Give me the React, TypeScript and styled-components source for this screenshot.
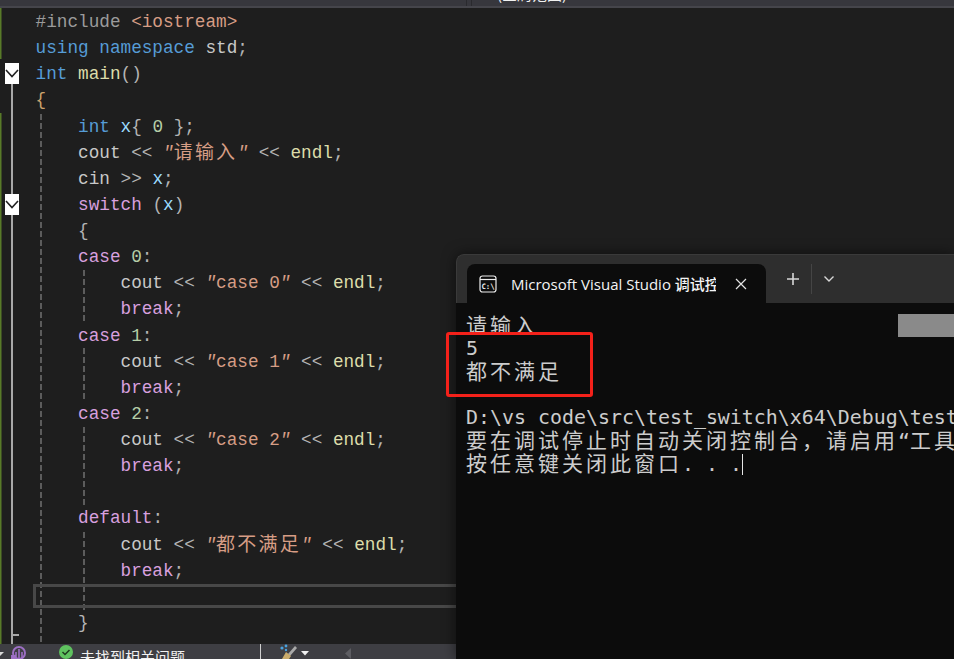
import React from "react";
import styled, { createGlobalStyle } from "styled-components";

const Global = createGlobalStyle`
  html, body { margin: 0; padding: 0; background: #1e1e1e; }
  #root { width: 954px; height: 659px; }
`;

const Page = styled.div`
  position: relative;
  width: 954px;
  height: 659px;
  overflow: hidden;
  display: flex;
  flex-direction: column;
  background: #1e1e1e;
`;

const TopBar = styled.div`
  flex: 0 0 8px;
  box-sizing: border-box;
  display: flex;
  align-items: flex-end;
  overflow: hidden;
  background: #37373d;
  border-bottom: 2px solid #45454b;
`;

const TopGap = styled.div`
  flex: 0 0 466px;
  height: 100%;
  border-right: 1px solid #2a2a2e;
`;

const TopDivider = styled.div`
  flex: 0 0 4px;
  height: 100%;
  border-right: 1px solid #2a2a2e;
`;

const TopLabel = styled.div`
  margin-left: 25px;
  height: 6px;
  display: flex;
  align-items: flex-end;
  padding-bottom: 3px;
  box-sizing: content-box;
  font: 15px/18px "Noto Sans CJK SC", sans-serif;
  color: #f1f1f1;
  white-space: nowrap;
`;

const Editor = styled.div`
  flex: 1;
  display: flex;
  min-height: 0;
  background: #1e1e1e;
`;

const GutterArt = styled.svg`
  flex: 0 0 33px;
  display: block;
  width: 33px;
  height: 636px;
`;

const Code = styled.div`
  position: relative;
  flex: 1;
  overflow: hidden;
  padding: 1px 0 0 2.6px;
  font-family: "Liberation Mono", "Noto Sans CJK SC", monospace;
  font-size: 17.7px;
  color: #dcdcdc;
`;

const Line = styled.div`
  height: 26.13px;
  line-height: 26.13px;
  white-space: pre;
`;

const Kw = styled.span`color: #569cd6;`;
const Ctl = styled.span`color: #d8a0df;`;
const Fn = styled.span`color: #dcdcaa;`;
const Var = styled.span`color: #9cdcfe;`;
const Num = styled.span`color: #b5cea8;`;
const Op = styled.span`color: #b4b4b4;`;
const Pre = styled.span`color: #9b9b9b;`;
const Inc = styled.span`color: #d69d85;`;
const Brace = styled.span`color: #c9a26d;`;
const Plain = styled.span`color: #c8c8c8;`;
const Str = styled.span`color: #d69d85;`;
const Quote = styled.span`font-style: italic;`;
const StrCjk = styled.span`
  font-family: "Noto Sans CJK SC", sans-serif;
  font-size: 19px;
  letter-spacing: 2.24px;
  line-height: 1;
  position: relative;
  top: 1px;
`;

const Guide = styled.div<{ $x: number; $top: number; $h: number }>`
  position: absolute;
  left: ${(p) => p.$x}px;
  top: ${(p) => p.$top}px;
  width: 2px;
  height: ${(p) => p.$h}px;
  background: repeating-linear-gradient(to bottom, #5c5c5c 0 6px, transparent 6px 9px);
`;

const CurrentLine = styled.div`
  position: absolute;
  left: 0;
  right: 0;
  top: 576px;
  height: 24px;
  box-sizing: border-box;
  border: 3px solid #484848;
`;

const StatusBar = styled.div`
  flex: 0 0 15px;
  display: flex;
  overflow: hidden;
  background: #3e3e43;
`;

const StatusIcon = styled.svg<{ $ml: number }>`
  flex: none;
  display: block;
  margin-left: ${(p) => p.$ml}px;
`;

const StatusText = styled.div`
  flex: none;
  margin-left: 7px;
  padding-top: 3px;
  font: 15px/20px "Noto Sans CJK SC", sans-serif;
  color: #f1f1f1;
  white-space: nowrap;
`;

const StatusSep = styled.div`
  flex: none;
  margin-left: 75px;
  width: 1px;
  height: 15px;
  background: #cfcfcf;
`;

const Terminal = styled.div`
  position: absolute;
  left: 456px;
  top: 254px;
  width: 498px;
  height: 405px;
  display: flex;
  flex-direction: column;
  box-sizing: border-box;
  background: #0c0c0c;
  border-top-left-radius: 8px;
  box-shadow: 0 0 14px rgba(0, 0, 0, 0.55);
`;

const TabBar = styled.div`
  flex: 0 0 49px;
  box-sizing: border-box;
  display: flex;
  align-items: flex-end;
  padding-left: 10px;
  background: #2e2e2e;
  border-top-left-radius: 8px;
  border-top: 1px solid #3a3a3a;
  border-left: 1px solid #3a3a3a;
`;

const Tab = styled.div`
  flex: 0 0 299px;
  height: 39px;
  box-sizing: border-box;
  display: flex;
  align-items: center;
  padding-left: 12px;
  background: #0c0c0c;
  border-radius: 8px 8px 0 0;
`;

const TabTitle = styled.div`
  flex: 0 0 205px;
  margin-left: 14px;
  overflow: hidden;
  white-space: nowrap;
  font: 500 15px/20px "Open Sans", "Noto Sans CJK SC", sans-serif;
  color: #f4f4f4;
`;

const TabClose = styled.svg`
  flex: none;
  margin-left: 19px;
`;

const NewTab = styled.svg`
  flex: none;
  align-self: center;
  margin-left: 20px;
`;

const TabSep = styled.div`
  flex: none;
  align-self: center;
  margin-left: 11px;
  width: 1px;
  height: 30px;
  background: #454545;
`;

const TabMenu = styled.svg`
  flex: none;
  align-self: center;
  margin-left: 11px;
`;

const TermBody = styled.div`
  flex: 1;
  padding: 11px 0 0 10px;
  overflow: hidden;
  font-family: "DejaVu Sans Mono", "Noto Sans CJK SC", monospace;
  font-size: 19.93px;
  color: #cccccc;
`;

const TermLine = styled.div<{ $clip?: boolean }>`
  height: ${(p) => (p.$clip ? 19 : 23)}px;
  margin-bottom: ${(p) => (p.$clip ? 4 : 0)}px;
  line-height: 23px;
  overflow: hidden;
  white-space: pre;
`;

const Cjk = styled.span`
  font-family: "Noto Sans CJK SC", sans-serif;
  font-size: 21px;
  letter-spacing: 3px;
  line-height: 1;
`;

const Caret = styled.span`
  display: inline-block;
  width: 1px;
  height: 22px;
  vertical-align: -5px;
  background: #e6e6e6;
`;

const Selection = styled.div`
  position: absolute;
  right: 0;
  top: 60px;
  width: 56px;
  height: 23px;
  background: #8a8a8a;
`;

const RedBox = styled.div`
  position: absolute;
  left: -10px;
  top: 78px;
  width: 147px;
  height: 65px;
  box-sizing: border-box;
  border: 3px solid #f4211a;
  border-radius: 3px;
`;

function Gutter() {
  return (
    <GutterArt viewBox="0 8 33 636">
      <rect x="0" y="8" width="1.5" height="51" fill="#587a28" />
      <rect x="0" y="113" width="1.5" height="531" fill="#587a28" />
      <rect x="11" y="84" width="2" height="110" fill="#a8a8a8" />
      <rect x="11" y="215" width="2" height="429" fill="#a8a8a8" />
      <rect x="11" y="634" width="8" height="2" fill="#a8a8a8" />
      <rect x="5" y="63" width="14" height="21" fill="#fff" />
      <path d="M6 70 L12 76.5 L18 70" fill="none" stroke="#222" strokeWidth="1.6" />
      <rect x="5" y="194" width="14" height="21" fill="#fff" />
      <path d="M6 201 L12 207.5 L18 201" fill="none" stroke="#222" strokeWidth="1.6" />
    </GutterArt>
  );
}

const S = ({ t }: { t: string }) => (
  <Str>
    <Quote>"</Quote>
    {t}
    <Quote>"</Quote>
  </Str>
);
const SC = ({ t }: { t: string }) => (
  <Str>
    <Quote>"</Quote>
    <StrCjk>{t}</StrCjk>
    <Quote>"</Quote>
  </Str>
);

const Cout = ({ pad, children }: { pad: string; children: React.ReactNode }) => (
  <Line>
    {pad}
    <Plain>cout</Plain> <Op>&lt;&lt;</Op> {children} <Op>&lt;&lt;</Op> <Fn>endl</Fn>
    <Op>;</Op>
  </Line>
);

const Brk = () => (
  <Line>
    {"        "}
    <Ctl>break</Ctl>
    <Op>;</Op>
  </Line>
);

const Case = ({ n }: { n: number }) => (
  <Line>
    {"    "}
    <Ctl>case</Ctl> <Num>{n}</Num>
    <Op>:</Op>
  </Line>
);

export default function App() {
  return (
    <Page>
      <Global />
      <TopBar>
        <TopGap />
        <TopDivider />
        <TopLabel>(全局范围)</TopLabel>
      </TopBar>
      <Editor>
        <Gutter />
        <Code>
          <Guide $x={7} $top={106} $h={530} />
          <Guide $x={50} $top={262} $h={53} />
          <Guide $x={50} $top={340} $h={53} />
          <Guide $x={50} $top={419} $h={79} />
          <Guide $x={50} $top={524} $h={78} />
          <CurrentLine />
          <Line>
            <Pre>#include</Pre> <Inc>&lt;iostream&gt;</Inc>
          </Line>
          <Line>
            <Kw>using</Kw> <Kw>namespace</Kw> <Plain>std</Plain>
            <Op>;</Op>
          </Line>
          <Line>
            <Kw>int</Kw> <Fn>main</Fn>
            <Op>()</Op>
          </Line>
          <Line>
            <Brace>{"{"}</Brace>
          </Line>
          <Line>
            {"    "}
            <Kw>int</Kw> <Var>x</Var>
            <Op>{"{"}</Op> <Num>0</Num> <Op>{"}"};</Op>
          </Line>
          <Cout pad="    ">
            <SC t="请输入" />
          </Cout>
          <Line>
            {"    "}
            <Plain>cin</Plain> <Op>&gt;&gt;</Op> <Var>x</Var>
            <Op>;</Op>
          </Line>
          <Line>
            {"    "}
            <Ctl>switch</Ctl> <Op>(</Op>
            <Var>x</Var>
            <Op>)</Op>
          </Line>
          <Line>
            {"    "}
            <Op>{"{"}</Op>
          </Line>
          <Case n={0} />
          <Cout pad="        ">
            <S t="case 0" />
          </Cout>
          <Brk />
          <Case n={1} />
          <Cout pad="        ">
            <S t="case 1" />
          </Cout>
          <Brk />
          <Case n={2} />
          <Cout pad="        ">
            <S t="case 2" />
          </Cout>
          <Brk />
          <Line />
          <Line>
            {"    "}
            <Ctl>default</Ctl>
            <Op>:</Op>
          </Line>
          <Cout pad="        ">
            <SC t="都不满足" />
          </Cout>
          <Brk />
          <Line />
          <Line>
            {"    "}
            <Op>{"}"}</Op>
          </Line>
        </Code>
      </Editor>
      <StatusBar>
        <StatusIcon $ml={0} width="5" height="15" viewBox="0 0 5 15">
          <path d="M0 8 H4 L0 12Z" fill="#d8d8d8" />
        </StatusIcon>
        <StatusIcon $ml={5} width="16" height="15" viewBox="0 0 16 15">
          <circle cx="9" cy="9" r="6" fill="none" stroke="#9d6fc4" strokeWidth="2" />
          <path d="M9 5 V15 M6 8 V15 M12 8 V15" stroke="#9d6fc4" strokeWidth="1.6" />
          <path d="M1 11 H6 V15 H1Z" fill="#9d6fc4" />
        </StatusIcon>
        <StatusIcon $ml={33} width="14" height="15" viewBox="0 0 14 15">
          <circle cx="7" cy="8" r="7" fill="#5fc25f" />
          <path d="M3.5 8 L6 10.5 L10.5 6" fill="none" stroke="#1f3a1f" strokeWidth="1.5" />
        </StatusIcon>
        <StatusText>未找到相关问题</StatusText>
        <StatusSep />
        <StatusIcon $ml={18} width="18" height="15" viewBox="0 0 18 15">
          <path d="M9 10 L16 2 L18 4 L11 12Z" fill="#a9a9a9" />
          <path d="M3 15 L7 8 L12 12 L10 15Z" fill="#c9ab6b" />
          <circle cx="3" cy="4" r="1.6" fill="#4aa3e0" />
          <circle cx="7" cy="2" r="1.4" fill="#4aa3e0" />
          <circle cx="7" cy="6" r="1.2" fill="#4aa3e0" />
        </StatusIcon>
        <StatusIcon $ml={3} width="10" height="15" viewBox="0 0 10 15">
          <path d="M1 7 H9 L5 11.5Z" fill="#f0f0f0" />
        </StatusIcon>
        <StatusIcon $ml={35} width="8" height="15" viewBox="0 0 8 15">
          <path d="M6 4 V15 L0 9.5Z" fill="#5d5d62" />
        </StatusIcon>
      </StatusBar>
      <Terminal>
        <TabBar>
          <Tab>
            <svg width="18" height="18" viewBox="0 0 18 18">
              <rect x="1" y="1" width="16" height="16" rx="2.5" fill="none" stroke="#eeeeee" strokeWidth="1.2" />
              <path d="M1 4.5 H17" stroke="#eeeeee" strokeWidth="1.2" />
              <text x="2.4" y="13.5" fontFamily="DejaVu Sans Mono" fontWeight="700" fontSize="7.4" fill="#eeeeee">
                C:\
              </text>
            </svg>
            <TabTitle>Microsoft Visual Studio 调试控制台</TabTitle>
            <TabClose width="12" height="12" viewBox="0 0 12 12">
              <path d="M1 1 L11 11 M11 1 L1 11" stroke="#e4e4e4" strokeWidth="1.2" />
            </TabClose>
          </Tab>
          <NewTab width="14" height="14" viewBox="0 0 14 14">
            <path d="M7 1 V13 M1 7 H13" stroke="#d8d8d8" strokeWidth="1.6" />
          </NewTab>
          <TabSep />
          <TabMenu width="12" height="8" viewBox="0 0 12 8">
            <path d="M1.5 1.5 L6 6 L10.5 1.5" fill="none" stroke="#d8d8d8" strokeWidth="1.4" />
          </TabMenu>
        </TabBar>
        <TermBody>
          <TermLine $clip>
            <Cjk>请输入</Cjk>
          </TermLine>
          <TermLine>5</TermLine>
          <TermLine>
            <Cjk>都不满足</Cjk>
          </TermLine>
          <TermLine />
          <TermLine>D:\vs code\src\test_switch\x64\Debug\test_switch.exe</TermLine>
          <TermLine>
            <Cjk>要在调试停止时自动关闭控制台，请启用</Cjk>“<Cjk>工具</Cjk>
          </TermLine>
          <TermLine>
            <Cjk>按任意键关闭此窗口</Cjk>. . .<Caret />
          </TermLine>
        </TermBody>
        <Selection />
        <RedBox />
      </Terminal>
    </Page>
  );
}
